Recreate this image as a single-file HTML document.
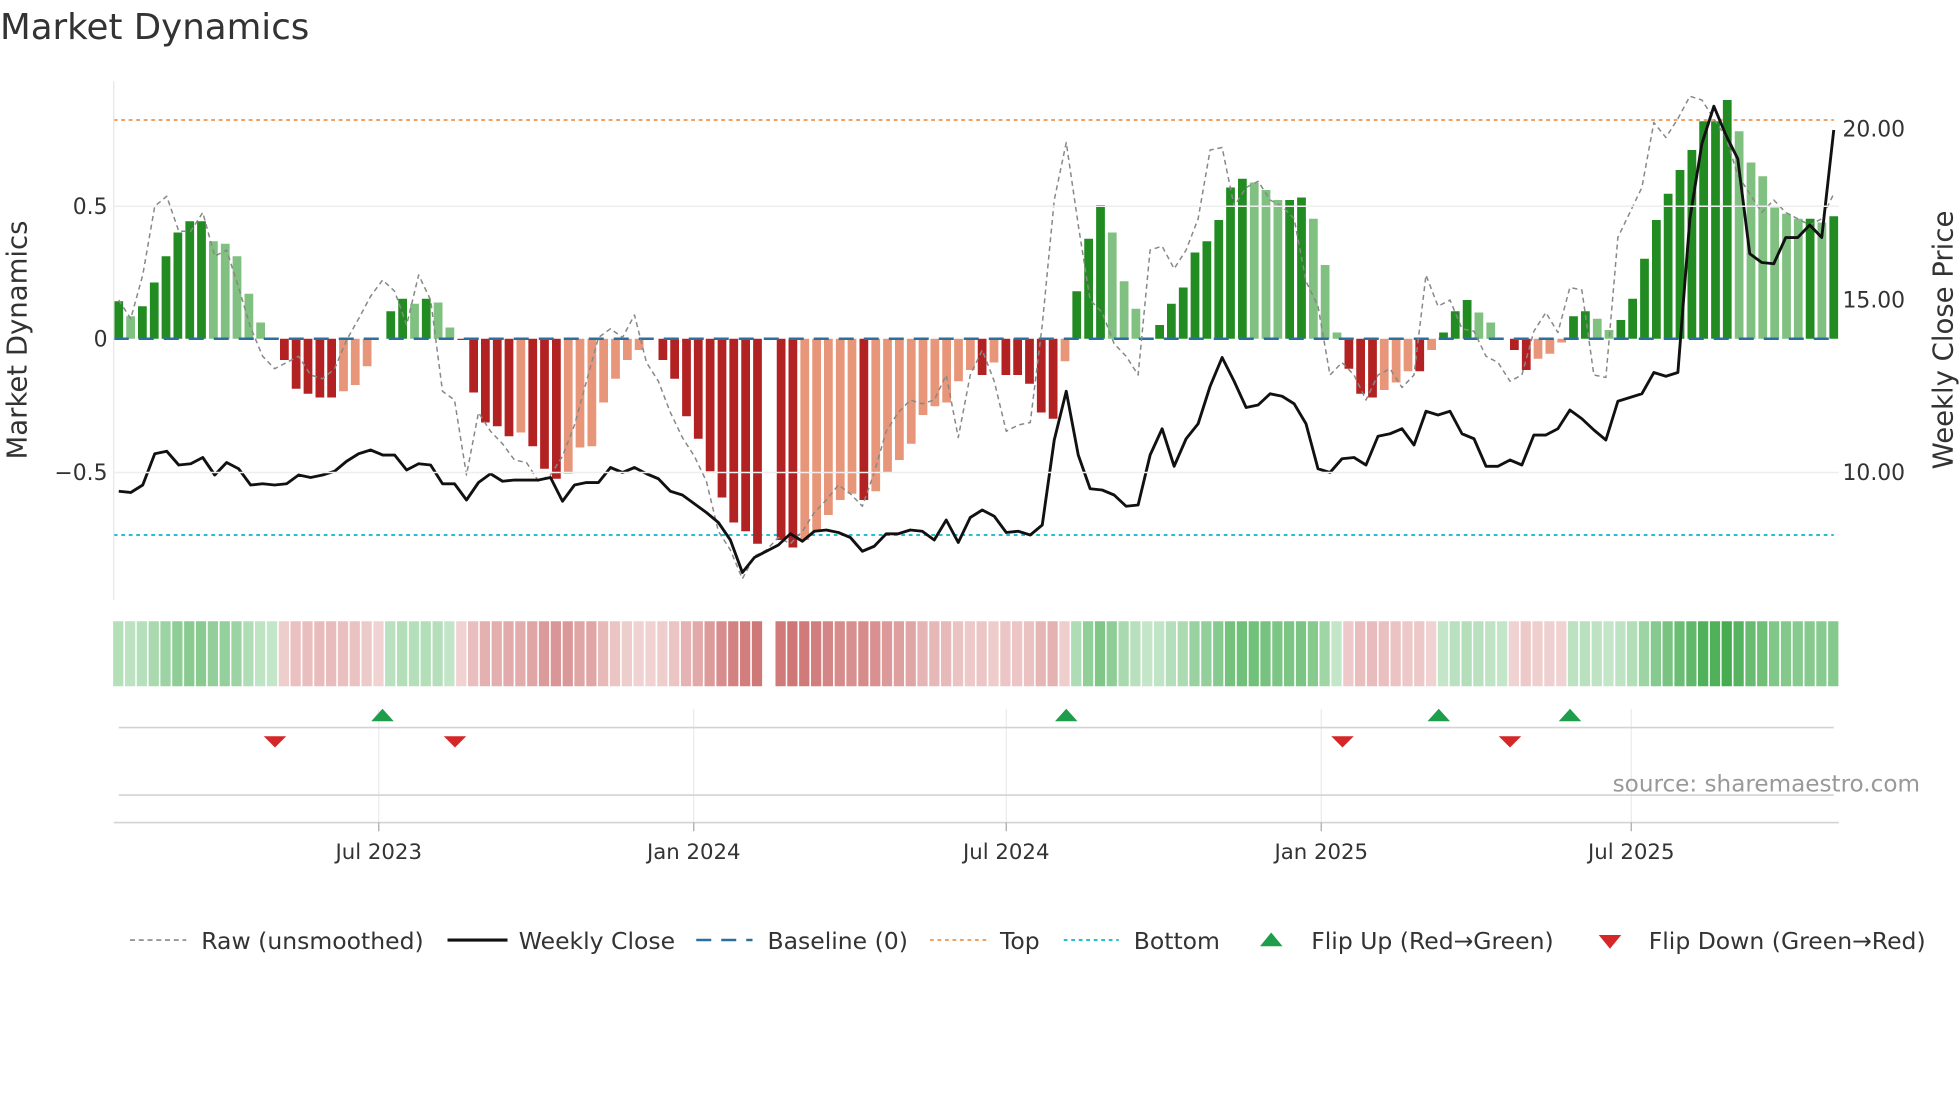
<!DOCTYPE html>
<html><head><meta charset="utf-8"><style>
html,body{margin:0;padding:0;background:#fff;width:1960px;height:1102px;overflow:hidden}
svg{display:block}
text{font-family:"DejaVu Sans","Liberation Sans",sans-serif;fill:#333}
</style></head><body>
<svg id="s" width="1960" height="1102" viewBox="0 0 1568 881.6" xmlns="http://www.w3.org/2000/svg">
<text x="0" y="31" font-size="28.5">Market Dynamics</text>
<g id="g"></g>
<line x1="91" y1="65" x2="91" y2="480" stroke="#e6e6e6" stroke-width="1"/>
<line x1="91" y1="165" x2="1471" y2="165" stroke="#eee" stroke-width="1.2"/>
<line x1="91" y1="378" x2="1471" y2="378" stroke="#eee" stroke-width="1.2"/>
<text x="86" y="171" font-size="17.5" text-anchor="end">0.5</text>
<text x="86" y="277" font-size="17.5" text-anchor="end">0</text>
<text x="86" y="384" font-size="17.5" text-anchor="end">−0.5</text>
<text x="1474" y="109" font-size="17.5">20.00</text>
<text x="1474" y="246" font-size="17.5">15.00</text>
<text x="1474" y="384" font-size="17.5">10.00</text>
<text transform="translate(21,272) rotate(-90)" font-size="22" text-anchor="middle">Market Dynamics</text>
<text transform="translate(1562,272) rotate(-90)" font-size="22" text-anchor="middle">Weekly Close Price</text>
<g stroke="#e8ecef" stroke-width="1">
<line x1="303" y1="567" x2="303" y2="658"/><line x1="555" y1="567" x2="555" y2="658"/>
<line x1="805" y1="567" x2="805" y2="658"/><line x1="1057" y1="567" x2="1057" y2="658"/>
<line x1="1305" y1="567" x2="1305" y2="658"/></g>
<line x1="95" y1="582" x2="1467" y2="582" stroke="#d3d3d3" stroke-width="1.3"/>
<line x1="95" y1="636" x2="1467" y2="636" stroke="#d3d3d3" stroke-width="1.3"/>
<line x1="91" y1="658" x2="1471" y2="658" stroke="#d3d3d3" stroke-width="1.3"/>
<g stroke="#aaa" stroke-width="1"><line x1="303" y1="658" x2="303" y2="665"/><line x1="555" y1="658" x2="555" y2="665"/><line x1="805" y1="658" x2="805" y2="665"/><line x1="1057" y1="658" x2="1057" y2="665"/><line x1="1305" y1="658" x2="1305" y2="665"/></g>
<g font-size="17" text-anchor="middle"><text x="303" y="687">Jul 2023</text><text x="555" y="687">Jan 2024</text><text x="805" y="687">Jul 2024</text><text x="1057" y="687">Jan 2025</text><text x="1305" y="687">Jul 2025</text></g>
<g fill="#1e9e4a"><path d="M297,577 L306,567 L315,577Z"/><path d="M844,577 L853,567 L862,577Z"/><path d="M1142,577 L1151,567 L1160,577Z"/><path d="M1247,577 L1256,567 L1265,577Z"/></g>
<g fill="#d62728"><path d="M211,589 L229,589 L220,598Z"/><path d="M355,589 L373,589 L364,598Z"/><path d="M1065,589 L1083,589 L1074,598Z"/><path d="M1199,589 L1217,589 L1208,598Z"/></g>
<text x="1536" y="633" font-size="18.5" text-anchor="end" style="fill:#999">source: sharemaestro.com</text>
<g font-size="18.8">
<line x1="104" y1="752" x2="149" y2="752" stroke="#888" stroke-width="1.3" stroke-dasharray="4,3"/><text x="161" y="759">Raw (unsmoothed)</text>
<line x1="358" y1="752" x2="406" y2="752" stroke="#111" stroke-width="2.5"/><text x="415" y="759">Weekly Close</text>
<line x1="557" y1="752" x2="602" y2="752" stroke="#2a6f9e" stroke-width="2" stroke-dasharray="12,8"/><text x="614" y="759">Baseline (0)</text>
<line x1="744" y1="752" x2="789" y2="752" stroke="#f0a060" stroke-width="1.6" stroke-dasharray="3,3"/><text x="800" y="759">Top</text>
<line x1="851" y1="752" x2="895" y2="752" stroke="#25c0d0" stroke-width="1.6" stroke-dasharray="3,3"/><text x="907" y="759">Bottom</text>
<path d="M1008,757 L1017,746 L1026,757Z" fill="#1e9e4a"/><text x="1049" y="759">Flip Up (Red→Green)</text>
<path d="M1279,748 L1297,748 L1288,759Z" fill="#d62728"/><text x="1319" y="759">Flip Down (Green→Red)</text>
</g>
</svg>
<script>
var B=[241,253,245,226,205,186,177,177,193,195,205,235,258,271,288,311,315,318,318,313,308,293,271,249,239,243,239,242,262,272,314,338,341,349,346,357,375,383,379,358,357,322,303,288,280,271,288,303,333,351,377,398,418,425,435,271,432,438,432,425,412,400,395,400,393,378,368,355,332,325,322,305,296,300,290,300,300,307,330,335,289,233,191,164,186,225,247,271,260,243,230,202,193,176,150,143,146,152,160,160,158,175,212,266,295,315,318,312,306,297,297,280,266,249,240,250,258,271,280,296,287,283,274,253,249,255,264,256,239,207,176,155,136,120,97,97,80,105,130,141,166,171,175,175,178,173];
var P=[393,394,388,363,361,372,371,366,380,370,375,388,387,388,387,380,382,380,377,369,363,360,364,364,376,371,372,387,387,400,386,379,385,384,384,384,382,401,388,386,386,374,378,374,379,383,393,396,403,410,418,432,458,446,441,436,427,433,425,424,426,430,441,437,427,427,424,425,432,416,434,414,408,413,426,425,428,420,352,313,364,391,392,396,405,404,364,343,373,351,339,309,286,305,326,324,315,317,323,339,375,378,367,366,372,349,347,343,356,329,332,329,347,351,373,373,368,372,348,348,343,328,335,344,352,321,318,315,298,301,298,175,115,85,108,127,203,210,211,190,190,180,190,104];
var R=[240,255,220,165,157,185,185,170,205,200,230,262,285,295,290,285,300,303,295,272,255,237,224,233,260,220,240,313,320,380,330,345,355,368,370,385,380,365,340,305,270,263,270,252,290,305,330,350,365,385,425,440,463,445,440,430,435,425,410,400,388,395,405,378,345,330,320,323,320,300,350,300,280,305,345,340,338,260,160,114,180,240,250,275,285,300,200,197,215,200,175,120,118,165,150,145,160,165,175,225,245,300,290,300,320,300,295,310,300,220,245,240,263,265,285,290,305,300,265,250,266,230,232,300,302,190,170,150,98,110,95,77,80,95,110,140,155,170,160,170,175,180,175,155];
var n=B.length,st=(1467-95)/(n-1),h='';
function X(i,N){return 95+i*(1372/(N-1));}
h+='<line x1="91" y1="96" x2="1467" y2="96" stroke="#f0a060" stroke-width="1.6" stroke-dasharray="3,3"/>';
h+='<line x1="91" y1="428" x2="1467" y2="428" stroke="#25c0d0" stroke-width="1.6" stroke-dasharray="3,3"/>';
var lastSign=1;
for(var i=0;i<n;i++){var x=95+i*st,y=B[i],v=271-y,pv=i?271-B[i-1]:0,c;
 if(i!==55){
 var sg=v>0?1:(v<0?-1:(i>0&&B[i-1]>271?-1:(i>0&&B[i-1]<271?1:lastSign)));lastSign=sg;
 var a=Math.min(1,Math.max(Math.abs(v),8)/190),hc;
 if(sg>0){hc='rgb('+Math.round(200-130*a)+','+Math.round(232-60*a)+','+Math.round(205-125*a)+')';}
 else{hc='rgb('+Math.round(242-40*a)+','+Math.round(215-110*a)+','+Math.round(215-110*a)+')';}
 h+='<rect x="'+(x-4.5).toFixed(1)+'" y="497" width="8.2" height="52" fill="'+hc+'"/>';}
 if(v>0)c=(v>=pv)?'#228b22':'#80c080';else if(v<0)c=(v<=pv)?'#b22222':'#e8967a';else continue;
 var t=Math.min(y,271),hh=Math.abs(v);h+='<rect x="'+(x-3.5).toFixed(1)+'" y="'+t+'" width="7" height="'+hh+'" fill="'+c+'"/>';
}
h+='<line x1="91" y1="271" x2="1467" y2="271" stroke="#2a6f9e" stroke-width="2" stroke-dasharray="12,8"/>';
function pl(A,s,w,d){var p='';for(var i=0;i<A.length;i++)p+=(i?'L':'M')+X(i,A.length).toFixed(1)+','+A[i];return '<path d="'+p+'" fill="none" stroke="'+s+'" stroke-width="'+w+'"'+(d?' stroke-dasharray="'+d+'"':'')+' stroke-linejoin="round"/>';}
h+=pl(R,'#888',1.2,'4,3');h+=pl(P,'#111',2.3);
document.getElementById('g').innerHTML=h;
</script>
</body></html>
